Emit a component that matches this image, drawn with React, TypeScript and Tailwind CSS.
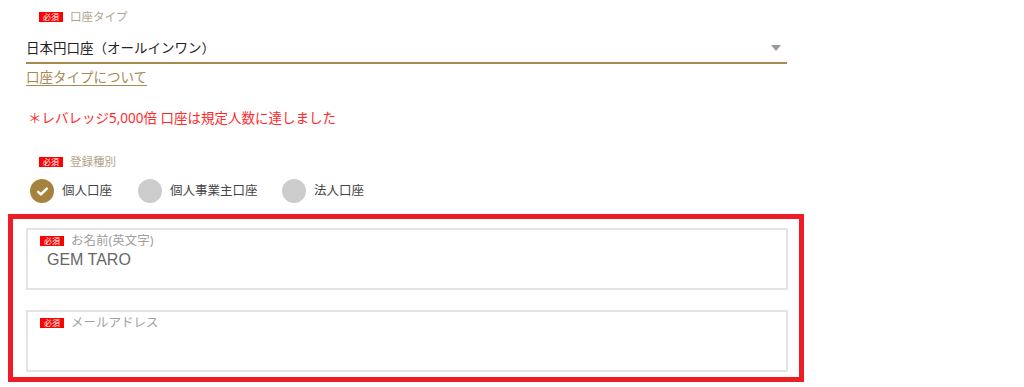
import React from "react";

const jp = "font-['Noto_Sans','Noto_Sans_CJK_JP',sans-serif]";

function Required() {
  return (
    <span className="inline-flex h-[10px] w-[24px] items-center justify-center bg-[#ff0000] text-[8px] leading-none text-white">
      必須
    </span>
  );
}

function Radio({ label, checked }: { label: string; checked?: boolean }) {
  return (
    <label className="flex items-center gap-[8px]">
      <span
        className={`flex h-[24px] w-[24px] items-center justify-center rounded-full ${
          checked ? "bg-[#a5833f]" : "bg-[#cccccc]"
        }`}
      >
        {checked && (
          <svg className="h-[13px] w-[13px]" viewBox="0 0 24 24" fill="none" stroke="white" strokeWidth={4.5} strokeLinecap="round" strokeLinejoin="round">
            <path d="M4 12.5l5 5L20 6.5" />
          </svg>
        )}
      </span>
      <span className="text-[12.5px] text-[#444]">{label}</span>
    </label>
  );
}

function Field({ label, value }: { label: string; value?: string }) {
  return (
    <div className="h-[62px] w-[762px] border-2 border-[#e4e4e4] bg-white">
      <div className="ml-[12px] mt-[5px] flex h-[12px] items-center gap-[7px]">
        <Required />
        <span className="text-[12.5px] text-[#a0a0a0]">{label}</span>
      </div>
      {value && (
        <div className="ml-[19px] mt-[3px] font-['Liberation_Sans',Arial,sans-serif] text-[16px] leading-[20px] text-[#666]">
          {value}
        </div>
      )}
    </div>
  );
}

export default function App() {
  return (
    <div className={`h-[387px] w-[1024px] overflow-hidden bg-white ${jp}`}>
      <div className="pl-[26px]">
        <div className="flex h-[12px] items-center gap-[7px] pl-[13px] mt-[11px]">
          <Required />
          <span className="text-[11.5px] text-[#b3a48c]">口座タイプ</span>
        </div>

        <div className="mt-[13px] flex h-[24px] w-[761px] items-center justify-between">
          <span className="text-[13.5px] text-[#222]">日本円口座（オールインワン）</span>
          <svg className="mr-[6px] h-[6px] w-[10px]" viewBox="0 0 10 6">
            <path d="M0 0h10L5 6z" fill="#999" />
          </svg>
        </div>
        <div className="mt-[2px] h-[2px] w-[761px] bg-[#a88a4e]" />

        <a className="inline-block text-[13.5px] leading-[16px] text-[#a88a55] underline underline-offset-[3px]">
          口座タイプについて
        </a>

        <div className="mt-[21px] pl-[2px] text-[13.5px] leading-[18px] text-[#ff2a2a]">
          ＊レバレッジ5,000倍 口座は規定人数に達しました
        </div>

        <div className="mt-[29px] flex h-[12px] items-center gap-[7px] pl-[13px]">
          <Required />
          <span className="text-[11.5px] text-[#b3a48c]">登録種別</span>
        </div>

        <div className="mt-[11px] flex items-center pl-[4px]">
          <div className="w-[108px]">
            <Radio label="個人口座" checked />
          </div>
          <div className="w-[144px]">
            <Radio label="個人事業主口座" />
          </div>
          <Radio label="法人口座" />
        </div>
      </div>

      <div className="ml-[8px] mt-[11px] w-[796px] border-[5px] border-[#ee1c25] pl-[13px] pt-[9px] pb-[5px]">
        <Field label="お名前(英文字)" value="GEM TARO" />
        <div className="mt-[20px]">
          <Field label="メールアドレス" />
        </div>
      </div>
    </div>
  );
}
